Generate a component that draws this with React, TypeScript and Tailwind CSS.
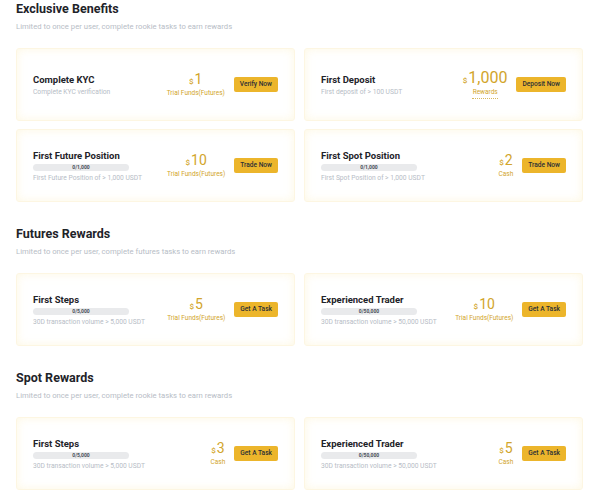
import React from "react";

type Task = {
  title: string;
  desc: string;
  progress?: string;
  amount: string;
  unit: string;
  button: string;
  big?: boolean;
  dotted?: boolean;
};

const sections: { title: string; subtitle: string; tasks: Task[] }[] = [
  {
    title: "Exclusive Benefits",
    subtitle: "Limited to once per user, complete rookie tasks to earn rewards",
    tasks: [
      { title: "Complete KYC", desc: "Complete KYC verification", amount: "1", unit: "Trial Funds(Futures)", button: "Verify Now" },
      { title: "First Deposit", desc: "First deposit of > 100 USDT", amount: "1,000", unit: "Rewards", button: "Deposit Now", big: true, dotted: true },
      { title: "First Future Position", desc: "First Future Position of > 1,000 USDT", progress: "0/1,000", amount: "10", unit: "Trial Funds(Futures)", button: "Trade Now" },
      { title: "First Spot Position", desc: "First Spot Position of > 1,000 USDT", progress: "0/1,000", amount: "2", unit: "Cash", button: "Trade Now" },
    ],
  },
  {
    title: "Futures Rewards",
    subtitle: "Limited to once per user, complete futures tasks to earn rewards",
    tasks: [
      { title: "First Steps", desc: "30D transaction volume > 5,000 USDT", progress: "0/5,000", amount: "5", unit: "Trial Funds(Futures)", button: "Get A Task" },
      { title: "Experienced Trader", desc: "30D transaction volume > 50,000 USDT", progress: "0/50,000", amount: "10", unit: "Trial Funds(Futures)", button: "Get A Task" },
    ],
  },
  {
    title: "Spot Rewards",
    subtitle: "Limited to once per user, complete rookie tasks to earn rewards",
    tasks: [
      { title: "First Steps", desc: "30D transaction volume > 5,000 USDT", progress: "0/5,000", amount: "3", unit: "Cash", button: "Get A Task" },
      { title: "Experienced Trader", desc: "30D transaction volume > 50,000 USDT", progress: "0/50,000", amount: "5", unit: "Cash", button: "Get A Task" },
    ],
  },
];

function Card({ t }: { t: Task }) {
  return (
    <div className="h-[73px] rounded-[3px] border border-[#fdf6e2] bg-white shadow-[inset_0_0_10px_rgba(253,243,208,0.6)] flex items-center pl-[16px] pr-[16px]">
      <div className="flex-1 flex flex-col">
        <div className="text-[9.5px] leading-[13px] font-bold text-[#1e2329]">{t.title}</div>
        {t.progress && (
          <div className="mt-[2px] w-[96px] h-[7px] rounded-full bg-[#e9eaec] flex items-center justify-center text-[5px] leading-[7px] font-bold text-[#474d57]">
            {t.progress}
          </div>
        )}
        <div className={`${t.progress ? "mt-[2px]" : "mt-[1px]"} text-[6.7px] leading-[10px] text-[#b7bdc6]`}>{t.desc}</div>
      </div>
      <div className="flex flex-col items-center mr-[9px]">
        <div className="flex items-baseline text-[#d2a52b] leading-[15px]">
          <span className="text-[8px] font-medium mr-[1px]">$</span>
          <span className={`${t.big ? "text-[16px]" : "text-[14px]"} font-normal`}>{t.amount}</span>
        </div>
        <div className="text-[6.5px] leading-[9px] text-[#d2a52b]">{t.unit}</div>
        {t.dotted && <div className="mt-[1px] w-[26px] border-t border-dotted border-[#d8b95c]" />}
      </div>
      <div className="h-[15px] px-[6px] rounded-[2px] bg-[#ecb52b] flex items-center text-[6.6px] font-medium text-[#2b2f36]">
        {t.button}
      </div>
    </div>
  );
}

export default function App() {
  return (
    <div className="w-[600px] h-[494px] overflow-hidden bg-white pl-[16px]" style={{ fontFamily: "Roboto, 'Noto Sans', sans-serif" }}>
      {sections.map((s, i) => (
        <div key={i} className={i === 0 ? "" : "mt-[23px]"}>
          <div className="h-[18px] text-[12.5px] leading-[18px] font-bold text-[#1e2329]">{s.title}</div>
          <div className="mt-[2px] h-[14px] text-[7.7px] leading-[14px] text-[#b7bdc6]">{s.subtitle}</div>
          <div className="mt-[14px] w-[567px] grid grid-cols-2 gap-x-[9px] gap-y-[8px]">
            {s.tasks.map((t, j) => (
              <Card key={j} t={t} />
            ))}
          </div>
        </div>
      ))}
    </div>
  );
}
